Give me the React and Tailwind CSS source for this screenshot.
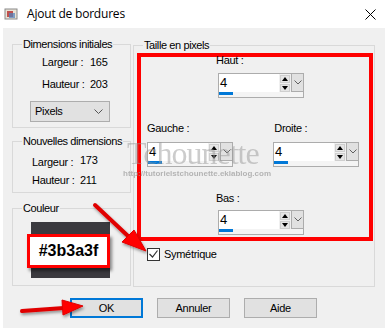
import React from 'react'

const font = { fontFamily: '"Liberation Sans", Arial, sans-serif' }

function Group({ title, className = '', children }) {
  return (
    <fieldset className={`border border-[#d9d9d9] ${className}`}>
      <legend className="ml-[9px] px-[1px] leading-[14px] text-[11px] tracking-[-0.4px] text-black">{title}</legend>
      {children}
    </fieldset>
  )
}

function SpinField({ className = '' }) {
  return (
    <div className={`w-[86px] h-[25px] border border-[#acacac] bg-white flex flex-col ${className}`}>
      <div className="flex h-[18px]">
        <div className="flex-1 text-[13px] leading-[18px] pl-[1px]">4</div>
        <div className="w-[12px] flex flex-col items-center justify-center bg-[#f0f0f0] gap-[1px]">
          <div className="w-[10px] h-[8px] bg-[#e5e5e5] border border-[#cfcfcf] flex items-center justify-center">
            <svg width="6" height="4" viewBox="0 0 6 4"><path d="M0 4 L3 0 L6 4 Z" fill="#000" /></svg>
          </div>
          <div className="w-[10px] h-[8px] bg-[#e5e5e5] border border-[#cfcfcf] flex items-center justify-center">
            <svg width="6" height="4" viewBox="0 0 6 4"><path d="M0 0 L3 4 L6 0 Z" fill="#000" /></svg>
          </div>
        </div>
        <div className="w-[13px] -mt-[1px] -mr-[1px] h-[19px] border border-[#acacac] bg-[#e1e1e1] flex items-center justify-center">
          <svg width="8" height="5" viewBox="0 0 8 5"><path d="M0.5 0.5 L4 4 L7.5 0.5" fill="none" stroke="#606060" strokeWidth="1" /></svg>
        </div>
      </div>
      <div className="flex-1 bg-[#f4f4f4]">
        <div className="w-[14px] h-[3px] bg-[#0078d7]" />
      </div>
    </div>
  )
}

function Button({ children, primary }) {
  return (
    <div
      className={`w-[73px] h-[20px] flex items-center justify-center text-[11px] bg-[#e1e1e1] ${
        primary ? 'border-2 border-[#0078d7]' : 'border border-[#adadad]'
      }`}
    >
      {children}
    </div>
  )
}

export default function App() {
  return (
    <div className="w-[388px] h-[332px] bg-white relative overflow-hidden text-black" style={font}>
      {/* Title bar */}
      <div className="h-[28px] flex items-center pl-[4px] pr-[12px]">
        <svg width="14" height="14" viewBox="0 0 14 14" className="mr-[9px]">
          <rect x="1" y="2" width="12" height="10" fill="#e9e2d4" stroke="#8a8a8a" />
          <rect x="3" y="4" width="6" height="6" fill="#c0504d" />
          <rect x="5" y="6" width="6" height="5" fill="#4f81bd" opacity="0.7" />
        </svg>
        <span className="text-[12px] tracking-[-0.2px]" style={{ fontFamily: '"Open Sans", "Liberation Sans", sans-serif' }}>Ajout de bordures</span>
        <svg width="11" height="11" viewBox="0 0 11 11" className="ml-auto">
          <path d="M0.5 0.5 L10.5 10.5 M10.5 0.5 L0.5 10.5" stroke="#000" strokeWidth="1" />
        </svg>
      </div>

      {/* Body */}
      <div className="ml-[3px] w-[382px] h-[300px] bg-[#f0f0f0] pt-[9px] text-[11px] tracking-[-0.3px]">
        <div className="flex">
          {/* Left column */}
          <div className="ml-[9px] w-[119px] flex flex-col">
            <Group title="Dimensions initiales" className="h-[91px]">
              <div className="ml-[29px] mt-[4px] leading-[14px] flex"><span className="w-[48px]">Largeur :</span><span>165</span></div>
              <div className="ml-[29px] mt-[8px] leading-[14px] flex"><span className="w-[48px]">Hauteur :</span><span>203</span></div>
              <div className="ml-[17px] mt-[10px] w-[80px] h-[21px] border border-[#adadad] bg-[#e1e1e1] flex items-center pl-[4px] pr-[6px]">
                <span>Pixels</span>
                <svg width="9" height="5" viewBox="0 0 9 5" className="ml-auto"><path d="M0.5 0.5 L4.5 4.5 L8.5 0.5" fill="none" stroke="#555" /></svg>
              </div>
            </Group>
            <Group title="Nouvelles dimensions" className="h-[59px] mt-[6px]">
              <div className="ml-[19px] mt-[7px] leading-[14px] flex"><span className="w-[48px]">Largeur :</span><span className="-mt-[2px]">173</span></div>
              <div className="ml-[19px] mt-[4px] leading-[14px] flex"><span className="w-[48px]">Hauteur :</span><span>211</span></div>
            </Group>
            <Group title="Couleur" className="h-[85px] mt-[8px] w-[119px]">
              <div className="relative ml-[18px] mt-[7px] w-[79px] h-[56px] bg-[#3b3a3f]">
                <div className="absolute left-[-4px] top-[12px] w-[83px] h-[34px] bg-white border-[3px] border-[#ff0000] flex items-center justify-center shadow-[2px_3px_3px_rgba(0,0,0,0.45)]">
                  <span className="text-[16px] font-bold tracking-normal">#3b3a3f</span>
                </div>
              </div>
            </Group>
          </div>

          {/* Right group */}
          <Group title="Taille en pixels" className="ml-[2px] w-[242px] h-[249px] mt-[1px]">
            <div className="ml-[3px] mt-[1px] w-[236px] h-[188px] border-4 border-[#ff0000] flex flex-col">
              <div className="ml-[75px] -mt-[3px] leading-[13px]">Haut :</div>
              <SpinField className="ml-[77px] mt-[6px]" />
              <div className="flex mt-[24px] leading-[13px]">
                <span className="ml-[6px]">Gauche :</span>
                <span className="ml-[85px]">Droite :</span>
              </div>
              <div className="flex mt-[7px]">
                <SpinField className="ml-[6px]" />
                <SpinField className="ml-[40px]" />
              </div>
              <div className="ml-[75px] mt-[25px] leading-[13px]">Bas :</div>
              <SpinField className="ml-[77px] mt-[5px]" />
            </div>
            <div className="flex items-center ml-[13px] mt-[5px]">
              <div className="w-[13px] h-[13px] border border-[#333] bg-white flex items-center justify-center">
                <svg width="9" height="8" viewBox="0 0 9 8"><path d="M0.5 4 L3.5 7 L8.5 0.5" fill="none" stroke="#333" strokeWidth="1.2" /></svg>
              </div>
              <span className="ml-[4px]">Symétrique</span>
            </div>
          </Group>
        </div>

        {/* Buttons */}
        <div className="flex ml-[67px] mt-[11px] gap-[14px]">
          <Button primary>OK</Button>
          <Button>Annuler</Button>
          <Button>Aide</Button>
        </div>
      </div>

      {/* Watermark */}
      <div className="absolute left-[127px] top-[136px] pointer-events-none select-none">
        <div className="text-[32px] leading-[34px] text-[#9a9a9a] opacity-50 tracking-[-1px]" style={{ fontFamily: '"Liberation Serif", serif' }}>Tchounette</div>
        <div className="text-[8px] leading-[9px] text-[#9a9a9a] opacity-70 -mt-[1px] ml-[-4px] font-bold">http://tutorielstchounette.eklablog.com</div>
      </div>

      {/* Red arrows */}
      <svg className="absolute left-0 top-0 pointer-events-none" width="388" height="332" viewBox="0 0 388 332">
        <defs>
          <filter id="sh" x="-20%" y="-20%" width="140%" height="140%">
            <feDropShadow dx="1" dy="2" stdDeviation="1.5" floodColor="#000" floodOpacity="0.4" />
          </filter>
        </defs>
        <g filter="url(#sh)" fill="#ff0000" stroke="#e00000">
          <path d="M95 205 L128 236" strokeWidth="4" strokeLinecap="round" />
          <path d="M146 251 L122 242 L134 230 Z" strokeWidth="1" />
          <path d="M22 311 L64 308" strokeWidth="4" strokeLinecap="round" />
          <path d="M83 306 L62 300 L63 315 Z" strokeWidth="1" />
        </g>
      </svg>
    </div>
  )
}
